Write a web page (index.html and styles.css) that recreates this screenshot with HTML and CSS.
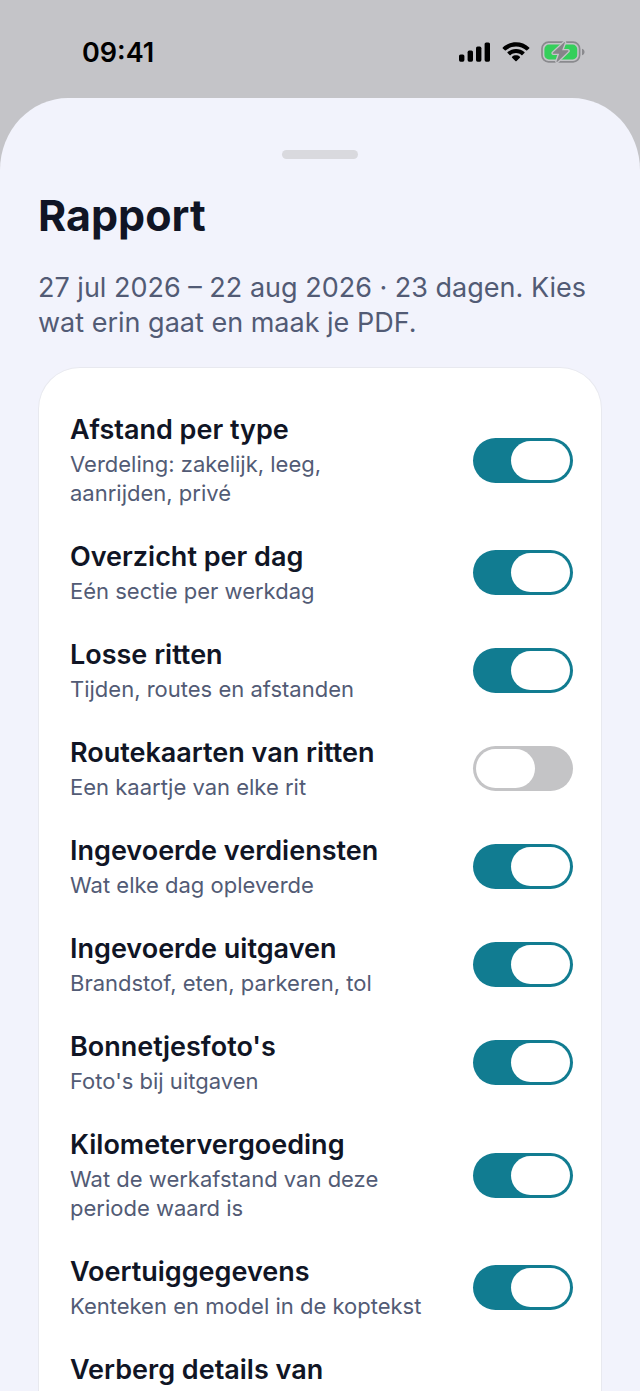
FILE: index.html
```html
<!DOCTYPE html>
<html lang="nl">
<head>
<meta charset="utf-8">
<meta name="viewport" content="width=device-width, initial-scale=1">
<title>Rapport</title>
<link rel="stylesheet" href="styles.css">
</head>
<body>
<header class="status">
  <time class="clock">09:41</time>
  <div class="indicators">
    <svg width="32" height="20" viewBox="0 0 32 20" aria-hidden="true"><rect x="0" y="12.5" width="5.4" height="7.2" rx="1.6"/><rect x="8.6" y="8.6" width="5.4" height="11.1" rx="1.6"/><rect x="17" y="4.6" width="5.4" height="15.1" rx="1.6"/><rect x="25.6" y="0.4" width="5.4" height="19.3" rx="1.6"/></svg>
    <svg width="28" height="20" viewBox="0 0 28 20" aria-hidden="true"><path d="M14 .3C19 .3 23.700 2.200 27.200 5.400Q27.700 5.900 27.200 6.400L25.200 8.300Q24.700 8.800 24.100 8.300C21.400 5.900 17.900 4.500 14 4.500S6.600 5.900 3.900 8.300Q3.300 8.800 2.800 8.300L.8 6.400Q.3 5.900 .8 5.400C4.300 2.200 9 .3 14 .3Z"/><path d="M14 6.900C17.300 6.900 20.200 8.100 22.400 10.100Q22.900 10.600 22.400 11.100L20.400 13Q19.900 13.500 19.300 13C17.900 11.800 16 11.100 14 11.100S10.100 11.800 8.700 13Q8.100 13.500 7.600 13L5.600 11.100Q5.100 10.600 5.600 10.100C7.800 8.100 10.700 6.900 14 6.900Z"/><path d="M14 13.300C15.500 13.300 16.800 13.800 17.900 14.700Q18.400 15.200 17.900 15.700L14.600 19Q14 19.600 13.400 19L10.100 15.700Q9.600 15.200 10.100 14.700C11.200 13.800 12.500 13.300 14 13.300Z"/></svg>
    <svg width="44" height="24" viewBox="0 0 44 24" aria-hidden="true"><rect x="1" y="2.200" width="37.600" height="19.600" rx="6.500" fill="none" stroke="#8a8a8e" stroke-width="1.700"/><rect x="3.400" y="4.600" width="32.800" height="14.800" rx="4.500" fill="#34cf5b"/><path d="M41 8.700C44.400 9.700 44.400 14.300 41 15.300Z" fill="#8a8a8e"/><path d="M23.300 1.200L11.300 12.300Q10.400 14.200 12.500 14.400H17.200L14.800 21.300Q15 23.200 16.700 22.500L27.900 11.700Q28.800 9.800 26.700 9.600H22.100L24.600 2.700Q24.600 .8 23.300 1.200Z" fill="#858589" stroke="#c4c4c8" stroke-width="1.400"/></svg>
  </div>
</header>
<main class="sheet">
  <div class="grabber"></div>
  <h1 class="heading">Rapport</h1>
  <p class="intro">27 jul 2026 – 22 aug 2026 · 23 dagen. Kies wat erin gaat en maak je PDF.</p>
  <section class="card">
    <label class="row"><span class="text"><span class="title">Afstand per type</span><span class="sub">Verdeling: zakelijk, leeg, aanrijden, privé</span></span><input class="switch" type="checkbox" role="switch" checked></label>
    <label class="row"><span class="text"><span class="title">Overzicht per dag</span><span class="sub">Eén sectie per werkdag</span></span><input class="switch" type="checkbox" role="switch" checked></label>
    <label class="row"><span class="text"><span class="title">Losse ritten</span><span class="sub">Tijden, routes en afstanden</span></span><input class="switch" type="checkbox" role="switch" checked></label>
    <label class="row"><span class="text"><span class="title">Routekaarten van ritten</span><span class="sub">Een kaartje van elke rit</span></span><input class="switch" type="checkbox" role="switch"></label>
    <label class="row"><span class="text"><span class="title">Ingevoerde verdiensten</span><span class="sub">Wat elke dag opleverde</span></span><input class="switch" type="checkbox" role="switch" checked></label>
    <label class="row"><span class="text"><span class="title">Ingevoerde uitgaven</span><span class="sub">Brandstof, eten, parkeren, tol</span></span><input class="switch" type="checkbox" role="switch" checked></label>
    <label class="row"><span class="text"><span class="title">Bonnetjesfoto's</span><span class="sub">Foto's bij uitgaven</span></span><input class="switch" type="checkbox" role="switch" checked></label>
    <label class="row"><span class="text"><span class="title">Kilometervergoeding</span><span class="sub">Wat de werkafstand van deze periode waard is</span></span><input class="switch" type="checkbox" role="switch" checked></label>
    <label class="row"><span class="text"><span class="title">Voertuiggegevens</span><span class="sub">Kenteken en model in de koptekst</span></span><input class="switch" type="checkbox" role="switch" checked></label>
    <div class="row"><span class="text"><span class="title">Verberg details van</span></span></div>
  </section>
</main>
</body>
</html>
```
FILE: styles.css
```css
* { box-sizing: border-box; }
body {
  margin: 0;
  min-height: 100vh;
  display: flex;
  flex-direction: column;
  background: #c4c4c8;
  color: #101525;
  font-family: Inter, "Liberation Sans", sans-serif;
}
.status {
  height: 98px;
  padding: 5px 55px 0 82px;
  display: flex;
  flex-shrink: 0;
  align-items: flex-start;
  justify-content: space-between;
  color: #000;
}
.clock {
  padding-top: 32px;
  font-size: 27px;
  line-height: 32px;
  font-weight: 600;
}
.indicators {
  padding-top: 35px;
  display: flex;
  align-items: center;
  gap: 11px;
}
.sheet {
  flex: 1;
  display: flex;
  flex-direction: column;
  padding: 52px 38px 0;
  background: #f2f3fc;
  border-radius: 68px 68px 0 0 / 72px 72px 0 0;
}
.grabber {
  width: 76px;
  height: 9px;
  border-radius: 5px;
  background: #d9d9de;
  align-self: center;
}
.heading {
  margin: 30px 0 0;
  font-size: 43px;
  line-height: 52px;
  font-weight: 700;
}
.intro {
  margin: 29px 0 0;
  font-size: 27px;
  line-height: 35px;
  color: #525b75;
}
.card {
  flex: 1;
  margin-top: 27px;
  padding: 44px 28px 0 31px;
  display: flex;
  flex-direction: column;
  gap: 31px;
  background: #fff;
  border: 1px solid #e8e9ef;
  border-bottom: 0;
  border-radius: 42px 42px 0 0;
}
.row {
  display: flex;
  align-items: center;
  justify-content: space-between;
  gap: 32px;
}
.text {
  display: flex;
  flex-direction: column;
  gap: 3px;
  max-width: 356px;
}
.title {
  font-size: 27px;
  line-height: 35px;
  font-weight: 600;
}
.sub {
  font-size: 22px;
  line-height: 29px;
  color: #525b75;
}
.switch {
  appearance: none;
  flex-shrink: 0;
  display: flex;
  width: 100px;
  height: 45px;
  margin: 0;
  padding: 3px;
  border-radius: 23px;
  background: #c4c4c6;
}
.switch::before {
  content: "";
  width: 59px;
  border-radius: 22px;
  background: #fff;
}
.switch:checked {
  justify-content: flex-end;
  background: #117c91;
}
```
